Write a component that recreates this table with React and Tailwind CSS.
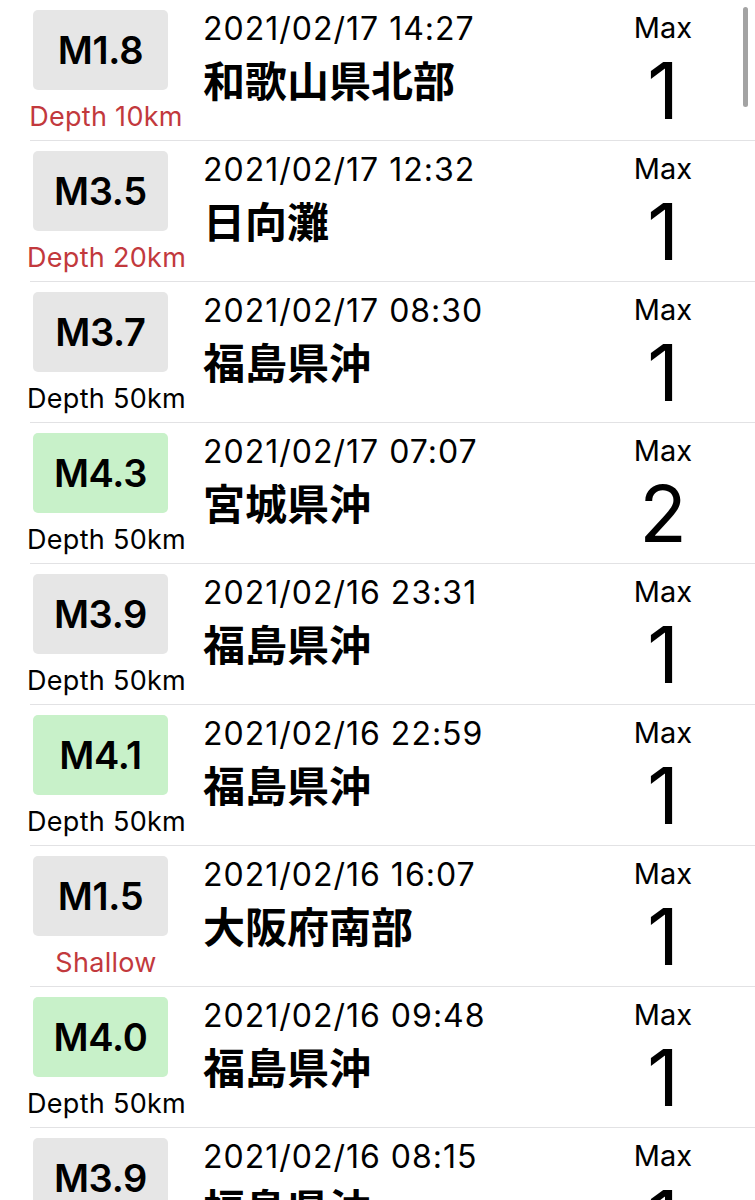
import React from "react";

const rows = [
  { m: "M1.8", t: "2021/02/17 14:27", p: "和歌山県北部", d: "Depth 10km", red: true, green: false, max: "1" },
  { m: "M3.5", t: "2021/02/17 12:32", p: "日向灘", d: "Depth 20km", red: true, green: false, max: "1" },
  { m: "M3.7", t: "2021/02/17 08:30", p: "福島県沖", d: "Depth 50km", red: false, green: false, max: "1" },
  { m: "M4.3", t: "2021/02/17 07:07", p: "宮城県沖", d: "Depth 50km", red: false, green: true, max: "2" },
  { m: "M3.9", t: "2021/02/16 23:31", p: "福島県沖", d: "Depth 50km", red: false, green: false, max: "1" },
  { m: "M4.1", t: "2021/02/16 22:59", p: "福島県沖", d: "Depth 50km", red: false, green: true, max: "1" },
  { m: "M1.5", t: "2021/02/16 16:07", p: "大阪府南部", d: "Shallow", red: true, green: false, max: "1" },
  { m: "M4.0", t: "2021/02/16 09:48", p: "福島県沖", d: "Depth 50km", red: false, green: true, max: "1" },
  { m: "M3.9", t: "2021/02/16 08:15", p: "福島県沖", d: "Depth 50km", red: false, green: false, max: "1" },
];

function Row({ r }) {
  return (
    <div>
      <div className="flex h-[140px]">
        <div className="w-[186px] shrink-0 pl-[27px] pt-[10px] flex flex-col">
          <div
            className={
              "ml-[6px] w-[135px] h-[80px] rounded-[5px] flex items-center justify-center text-[38px] font-semibold text-black tracking-[-0.3px] " +
              (r.green ? "bg-[#c8f1c9]" : "bg-[#e6e6e6]")
            }
          >
            {r.m}
          </div>
          <div
            className={
              "mt-[12px] w-[158px] text-center text-[27px] leading-[30px] tracking-[0.3px] whitespace-nowrap " +
              (r.red ? "text-[#c2393d]" : "text-black")
            }
          >
            {r.d}
          </div>
        </div>
        <div className="flex-1 pl-[17px] pt-[10px] flex flex-col">
          <div className="text-[32px] leading-[38px] tracking-[1px] text-black whitespace-nowrap">{r.t}</div>
          <div
            className="mt-[6px] text-[42px] leading-[50px] font-bold text-black whitespace-nowrap"
            style={{ fontFamily: "'Noto Sans CJK JP', sans-serif" }}
          >
            {r.p}
          </div>
        </div>
        <div className="w-[100px] mr-[42px] shrink-0 flex flex-col items-center pt-[11px]">
          <div className="text-[29px] leading-[34px] text-black">Max</div>
          <div className="text-[78px] leading-[80px] font-normal text-black mt-[6px]">{r.max}</div>
        </div>
      </div>
      <div className="ml-[30px] h-px bg-[#e2e2e4]" />
    </div>
  );
}

export default function App() {
  return (
    <div
      className="relative w-[755px] h-[1200px] overflow-hidden bg-white"
      style={{ fontFamily: "Inter, 'Noto Sans CJK JP', sans-serif" }}
    >
      {rows.map((r, i) => (
        <Row key={i} r={r} />
      ))}
      <div className="absolute right-[7px] top-[7px] w-[5px] h-[100px] rounded-full bg-[#a3a3a3]" />
    </div>
  );
}
